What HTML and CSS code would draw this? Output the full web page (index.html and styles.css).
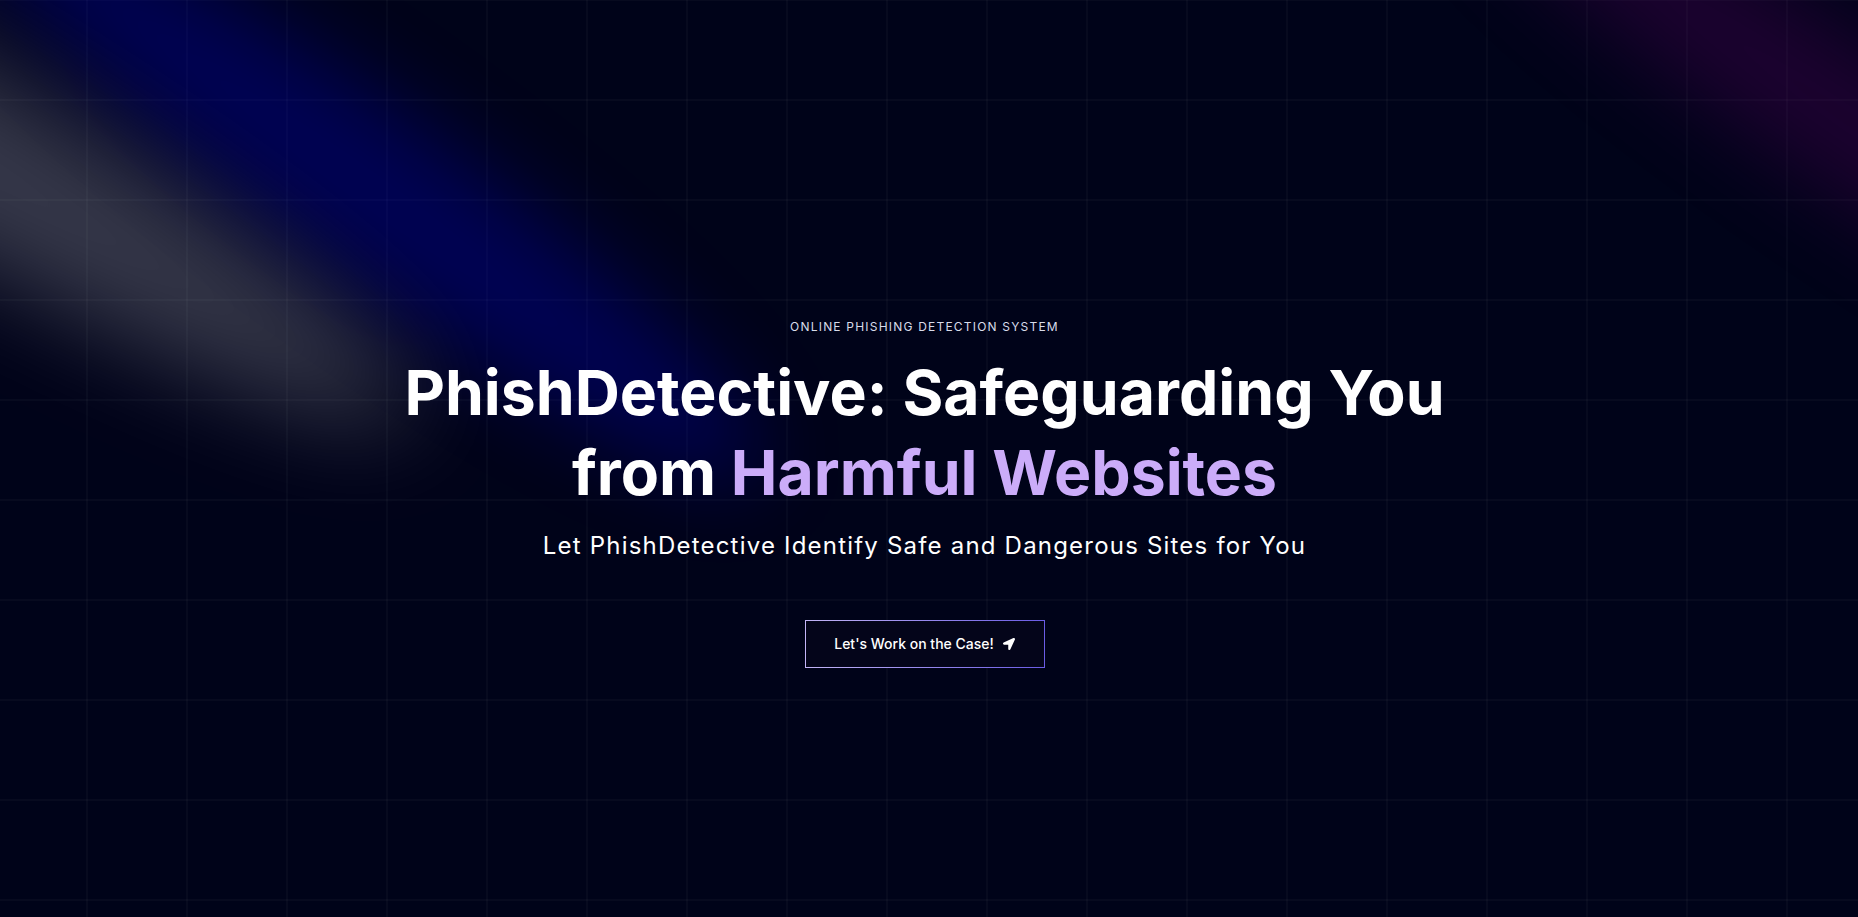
FILE: index.html
```html
<!DOCTYPE html>
<html lang="en">
<head>
<meta charset="utf-8">
<title>PhishDetective</title>
<link rel="stylesheet" href="styles.css">
</head>
<body>
<main class="hero">
  <svg class="spotlights" viewBox="0 0 1858 917" preserveAspectRatio="none" aria-hidden="true">
    <defs>
      <filter id="blur-lg" filterUnits="userSpaceOnUse" x="-800" y="-800" width="3600" height="2600" color-interpolation-filters="sRGB">
        <feGaussianBlur stdDeviation="49"/>
      </filter>
      <filter id="blur-md" filterUnits="userSpaceOnUse" x="-800" y="-800" width="3600" height="2600" color-interpolation-filters="sRGB">
        <feGaussianBlur stdDeviation="42"/>
      </filter>
    </defs>
    <g filter="url(#blur-lg)">
      <ellipse cx="0" cy="0" rx="621" ry="90" transform="translate(-125 105) rotate(30)" fill="#ffffff" fill-opacity="0.21"/>
    </g>
    <g filter="url(#blur-md)">
      <ellipse cx="0" cy="0" rx="480" ry="82" transform="translate(370 190) rotate(36)" fill="#0000ff" fill-opacity="0.25"/>
    </g>
    <g filter="url(#blur-md)">
      <ellipse cx="0" cy="0" rx="472" ry="70" transform="translate(1850 120) rotate(34.7)" fill="#800080" fill-opacity="0.22"/>
    </g>
  </svg>

  <section class="content">
    <p class="eyebrow">Online Phishing Detection System</p>
    <h1 class="title">
      <span class="line">PhishDetective: Safeguarding You</span>
      <span class="line">from <span class="accent">Harmful Websites</span></span>
    </h1>
    <p class="subtitle">Let PhishDetective Identify Safe and Dangerous Sites for You</p>
    <a class="cta" href="#">
      <span>Let's Work on the Case!</span>
      <svg class="cta-icon" viewBox="0 0 512 512" aria-hidden="true"><path d="M444.52 3.52L28.74 195.42c-47.97 22.39-31.98 92.75 19.19 92.75h175.91v175.91c0 51.17 70.36 67.17 92.75 19.19l191.9-415.78c15.99-38.39-25.59-79.97-63.97-63.97z" fill="#ffffff"/></svg>
    </a>
  </section>
</main>
</body>
</html>
```

FILE: styles.css
```css
* {
  box-sizing: border-box;
}

html, body {
  margin: 0;
  padding: 0;
}

body {
  background: #000319;
  font-family: Inter, "Noto Sans", "Liberation Sans", sans-serif;
  color: #ffffff;
  overflow: hidden;
}

.hero {
  position: relative;
  width: 100%;
  height: 917px;
  overflow: hidden;
  background-color: #000319;
  background-image:
    linear-gradient(to right, rgba(255, 255, 255, 0.028) 2px, transparent 2px),
    linear-gradient(to bottom, rgba(255, 255, 255, 0.028) 2px, transparent 2px);
  background-size: 100px 100px;
  background-position: 86px -1px;
}

.spotlights {
  position: absolute;
  inset: 0;
  width: 100%;
  height: 100%;
  pointer-events: none;
}

.content {
  position: relative;
  z-index: 1;
  display: flex;
  flex-direction: column;
  align-items: center;
  padding-top: 319px;
  padding-right: 9px;
  text-align: center;
}

.eyebrow {
  margin: 0;
  font-size: 12px;
  line-height: 16px;
  letter-spacing: 0.1em;
  text-transform: uppercase;
  color: #d8dcea;
}

.title {
  margin: 17px 0 0;
  font-size: 62.5px;
  line-height: 80px;
  font-weight: 700;
  letter-spacing: 0;
  color: #ffffff;
}

.line {
  display: block;
}

.accent {
  color: #cbacf9;
}

.subtitle {
  margin: 18px 0 0;
  font-size: 24px;
  line-height: 32px;
  font-weight: 400;
  letter-spacing: 0.05em;
  color: #ffffff;
}

.cta {
  margin-top: 58px;
  width: 240px;
  height: 48px;
  display: flex;
  align-items: center;
  justify-content: center;
  gap: 9px;
  border: 1px solid transparent;
  background:
    linear-gradient(#04051a, #04051a) padding-box,
    linear-gradient(90deg, #c3b5f6, #6a5ce4) border-box;
  color: #ffffff;
  text-decoration: none;
  font-size: 14px;
  font-weight: 500;
  line-height: 20px;
}

.cta-icon {
  width: 12px;
  height: 12px;
  flex: none;
}
```
